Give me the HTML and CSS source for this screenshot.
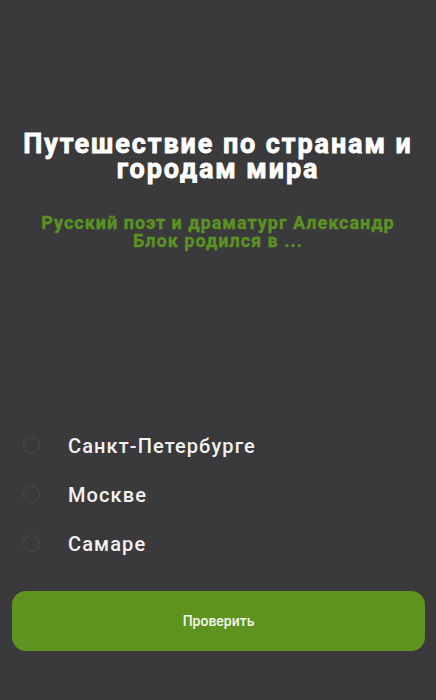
FILE: index.html
```html
<!DOCTYPE html>
<html lang="ru">
<head>
<meta charset="utf-8">
<link rel="stylesheet" href="styles.css">
</head>
<body>
<div class="screen">
  <header class="head">
    <h1 class="title">Путешествие по странам и городам мира</h1>
    <p class="question">Русский поэт и драматург Александр Блок родился в ...</p>
  </header>
  <ul class="options">
    <li class="option"><span class="radio"></span><span class="label">Санкт-Петербурге</span></li>
    <li class="option"><span class="radio"></span><span class="label">Москве</span></li>
    <li class="option"><span class="radio"></span><span class="label">Самаре</span></li>
  </ul>
  <div class="actions">
    <button class="check">Проверить</button>
  </div>
</div>
</body>
</html>
```
FILE: styles.css
```css
html, body {
  margin: 0;
  padding: 0;
  background: #3a393b;
}
.screen {
  width: 436px;
  height: 700px;
  display: flex;
  flex-direction: column;
  font-family: Roboto, "Noto Sans", sans-serif;
  color: #f4f4f4;
}
.head {
  padding: 132px 4px 0;
  text-align: center;
}
.title {
  margin: 0;
  font-size: 27px;
  line-height: 25px;
  font-weight: 700;
  letter-spacing: 1.9px;
  -webkit-text-stroke: 0.8px #ffffff;
  color: #ffffff;
}
.question {
  margin: 32px 18px 0;
  font-size: 18px;
  line-height: 18px;
  font-weight: 700;
  letter-spacing: 1px;
  -webkit-text-stroke: 0.4px #5b9223;
  color: #5b9223;
}
.options {
  list-style: none;
  margin: 171px 0 0;
  padding: 0;
  display: flex;
  flex-direction: column;
}
.option {
  height: 49px;
  display: flex;
  align-items: center;
  padding-left: 23px;
  gap: 28px;
}
.radio {
  width: 15px;
  height: 15px;
  border: 1.5px solid #4b4a4c;
  border-radius: 50%;
  flex: none;
}
.label {
  font-size: 20px;
  line-height: 24px;
  font-weight: 500;
  letter-spacing: 1.1px;
  color: #f2f2f2;
}
.actions {
  padding: 23px 11px 0 12px;
}
.check {
  display: block;
  width: 100%;
  height: 60px;
  border: none;
  border-radius: 14px;
  background: #5e9320;
  color: #f4f7ee;
  font-family: Roboto, "Noto Sans", sans-serif;
  font-size: 14px;
  font-weight: 500;
}
```
